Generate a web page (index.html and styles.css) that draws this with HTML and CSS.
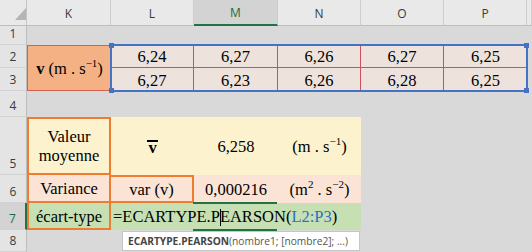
FILE: index.html
```html
<!DOCTYPE html>
<html lang="fr">
<head>
<meta charset="utf-8">
<title>Feuille</title>
<link rel="stylesheet" href="styles.css">
</head>
<body>
<div class="sheet">
  <div class="corner"><svg width="27" height="26" viewBox="0 0 27 26"><polygon points="15,20 26,20 26,8" fill="#b5b5b5"/></svg></div>
  <div class="ch">K</div>
  <div class="ch">L</div>
  <div class="ch sel">M</div>
  <div class="ch">N</div>
  <div class="ch">O</div>
  <div class="ch">P</div>
  <div class="ch"></div>

  <div class="rh">1</div><div class="blank span7"></div>

  <div class="rh">2</div>
  <div class="cell k23"><span><b>v</b> (m . s<sup>−1</sup>)</span></div>
  <div class="block">
    <div class="bc">6,24</div>
    <div class="bc">6,27</div>
    <div class="bc">6,26</div>
    <div class="bc">6,27</div>
    <div class="bc">6,25</div>
    <div class="bc">6,27</div>
    <div class="bc">6,23</div>
    <div class="bc">6,26</div>
    <div class="bc">6,28</div>
    <div class="bc">6,25</div>
    <div class="range"><i class="hd tl"></i><i class="hd tr"></i><i class="hd bl"></i><i class="hd br"></i></div>
  </div>
  <div class="blank"></div>
  <div class="rh">3</div>
  <div class="blank"></div>

  <div class="rh">4</div><div class="blank span7"></div>

  <div class="rh">5</div>
  <div class="cell yel kbox k5"><span>Valeur<br>moyenne</span></div>
  <div class="cell yel"><span class="vbar">v</span></div>
  <div class="cell yel">6,258</div>
  <div class="cell yel"><span>(m . s<sup>−1</sup>)</span></div>
  <div class="blank span3"></div>

  <div class="rh">6</div>
  <div class="cell pea kbox">Variance</div>
  <div class="cell pea lbox">var (v)</div>
  <div class="cell pea">0,000216</div>
  <div class="cell pea"><span>(m<sup>2</sup> . s<sup>−2</sup>)</span></div>
  <div class="blank span3"></div>

  <div class="rh sel">7</div>
  <div class="cell grn kbox">écart-type</div>
  <div class="formula">=ECARTYPE.P<span class="caret"></span>EARSON(<span class="ref">L2:P3</span>)<div class="active"></div></div>
  <div class="blank span3"></div>

  <div class="rh">8</div><div class="blank span7"></div>

  <div class="tip"><b>ECARTYPE.PEARSON</b>(nombre1; [nombre2]; ...)</div>
</div>
</body>
</html>
```
FILE: styles.css
```css
html, body {
  margin: 0;
  padding: 0;
  background: #d9d9d9;
}

.sheet {
  position: relative;
  width: 532px;
  height: 252px;
  overflow: hidden;
  display: grid;
  grid-template-columns: 27px 84px 83px 84px 83px 83px 83px 5px;
  grid-template-rows: 26px 19px 23px 23px 26px 58px 28px 27px 22px;
  font-family: "Liberation Serif", "Times New Roman", serif;
  font-size: 16.5px;
  color: #000;
  background: #d9d9d9;
}

.corner {
  background: #e9e9e9;
  border-right: 1px solid #c4c4c4;
  border-bottom: 1px solid #bdbdbd;
  box-sizing: border-box;
}
.corner svg { display: block; }

.ch {
  box-sizing: border-box;
  background: #e9e9e9;
  border-bottom: 1px solid #bdbdbd;
  border-right: 1px solid #cdcdcd;
  display: flex;
  align-items: center;
  justify-content: center;
  font-family: "Open Sans", "Noto Sans", sans-serif;
  font-size: 12px;
  color: #3a3a3a;
  padding-top: 1px;
}
.ch.sel {
  background: #d3d3d3;
  border-bottom: 2px solid #217346;
  color: #1d6b3e;
}

.rh {
  box-sizing: border-box;
  background: #e4e4e4;
  border-right: 1px solid #bdbdbd;
  border-bottom: 1px solid #d2d2d2;
  display: flex;
  align-items: flex-end;
  justify-content: center;
  font-family: "Open Sans", "Noto Sans", sans-serif;
  font-size: 12px;
  line-height: 16px;
  color: #3a3a3a;
  padding-bottom: 2px;
}
.rh.sel {
  background: #d3d3d3;
  border-right: 2px solid #217346;
  color: #1d6b3e;
}

.blank { background: #d9d9d9; }
.span7 { grid-column: span 7; }
.span3 { grid-column: span 3; }

.cell {
  box-sizing: border-box;
  display: flex;
  align-items: center;
  justify-content: center;
  text-align: center;
  white-space: nowrap;
  padding-top: 2px;
}

sup {
  font-size: 11px;
  line-height: 0;
  vertical-align: 7px;
}

.k23 {
  grid-row: span 2;
  background: #f4b183;
  border: 1px solid #d6604f;
  border-right: none;
}

.block {
  grid-column: span 5;
  grid-row: span 2;
  position: relative;
  display: grid;
  grid-template-columns: 83px 84px 83px 83px 83px;
  grid-template-rows: 23px 23px;
  background: #eee3dc;
}
.bc {
  box-sizing: border-box;
  display: flex;
  align-items: center;
  justify-content: center;
  border-right: 1px solid #c9535e;
  padding-top: 2px;
}
.bc:nth-child(5), .bc:nth-child(10) { border-right: none; }
.bc:nth-child(-n+5) { border-bottom: 1px solid #c9535e; }

.range {
  position: absolute;
  inset: -1px -1px -1px -1px;
  border: 2px solid #4473c5;
}
.hd {
  position: absolute;
  width: 5px;
  height: 5px;
  background: #4473c5;
}
.hd.tl { left: -3px; top: -3px; }
.hd.tr { right: -3px; top: -3px; }
.hd.bl { left: -3px; bottom: -3px; }
.hd.br { right: -3px; bottom: -3px; }

.yel { background: #fcf2cd; }
.pea { background: #fbe4d6; }
.grn { background: #c6e0b4; }

.kbox {
  border: 2px solid #ed7d31;
  border-top: none;
}
.k5 {
  border-top: 2px solid #ed7d31;
  line-height: 19px;
  padding-top: 0;
}
.lbox {
  border-top: 2px solid #ed7d31;
  border-right: 2px solid #ed7d31;
  border-bottom: 2px solid #ed7d31;
}

.vbar {
  display: inline-block;
  font-weight: bold;
  line-height: 0.7;
  border-top: 2px solid #000;
  padding: 0 1px;
}

.formula {
  grid-column: span 3;
  position: relative;
  background: #c6e0b4;
  display: flex;
  align-items: center;
  padding-left: 2px;
  padding-top: 1px;
  white-space: nowrap;
  box-sizing: border-box;
}
.caret {
  display: inline-block;
  width: 1px;
  height: 17px;
  background: #000;
  vertical-align: -3px;
  margin: 0 -1px 0 0;
}
.ref { color: #2f6fc5; }
.active {
  position: absolute;
  left: 82px;
  width: 84px;
  top: -1px;
  bottom: -1px;
  border-top: 2px solid #217346;
  border-bottom: 2px solid #217346;
  box-sizing: border-box;
}

.tip {
  position: absolute;
  left: 122px;
  top: 231px;
  width: 238px;
  height: 20px;
  box-sizing: border-box;
  background: #fff;
  border: 1px solid #c6c6c6;
  font-family: "Open Sans", "Noto Sans", sans-serif;
  font-size: 10.2px;
  line-height: 18px;
  color: #555;
  padding-left: 5px;
  white-space: nowrap;
}
.tip b { color: #444; font-weight: 700; }
```
